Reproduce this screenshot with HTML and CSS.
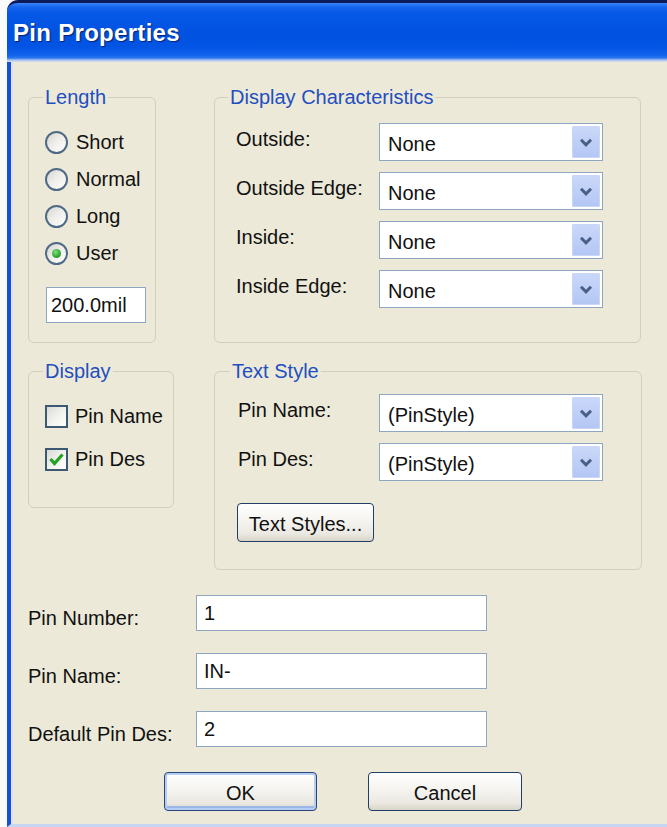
FILE: index.html
```html
<!DOCTYPE html>
<html lang="en">
<head>
<meta charset="utf-8">
<title>Pin Properties</title>
<link rel="stylesheet" href="styles.css">
</head>
<body>
<div class="window">
  <div class="titlebar"><span class="title">Pin Properties</span></div>
  <div class="client">

    <div class="group-row top-row">
      <fieldset class="group group-length">
        <legend>Length</legend>
        <div class="radio-list">
          <label class="radio"><span class="radio-mark"></span>Short</label>
          <label class="radio"><span class="radio-mark"></span>Normal</label>
          <label class="radio"><span class="radio-mark"></span>Long</label>
          <label class="radio"><span class="radio-mark is-checked"></span>User</label>
        </div>
        <div class="textbox length-box">200.0mil</div>
      </fieldset>

      <fieldset class="group group-chars">
        <legend>Display Characteristics</legend>
        <div class="field-grid chars-grid">
          <span class="field-label">Outside:</span>
          <div class="combo"><span class="combo-value">None</span><span class="combo-button"><svg width="14" height="9" viewBox="0 0 14 9"><path d="M2 1.8 L7 6.8 L12 1.8" fill="none" stroke="#4a5f86" stroke-width="3"/></svg></span></div>
          <span class="field-label">Outside Edge:</span>
          <div class="combo"><span class="combo-value">None</span><span class="combo-button"><svg width="14" height="9" viewBox="0 0 14 9"><path d="M2 1.8 L7 6.8 L12 1.8" fill="none" stroke="#4a5f86" stroke-width="3"/></svg></span></div>
          <span class="field-label">Inside:</span>
          <div class="combo"><span class="combo-value">None</span><span class="combo-button"><svg width="14" height="9" viewBox="0 0 14 9"><path d="M2 1.8 L7 6.8 L12 1.8" fill="none" stroke="#4a5f86" stroke-width="3"/></svg></span></div>
          <span class="field-label">Inside Edge:</span>
          <div class="combo"><span class="combo-value">None</span><span class="combo-button"><svg width="14" height="9" viewBox="0 0 14 9"><path d="M2 1.8 L7 6.8 L12 1.8" fill="none" stroke="#4a5f86" stroke-width="3"/></svg></span></div>
        </div>
      </fieldset>
    </div>

    <div class="group-row second-row">
      <fieldset class="group group-display">
        <legend>Display</legend>
        <div class="check-list">
          <label class="check"><span class="check-mark"></span>Pin Name</label>
          <label class="check"><span class="check-mark is-checked"><svg width="23" height="23" viewBox="0 0 23 23"><path d="M5.5 11 L9.5 15.5 L17.5 6.5" fill="none" stroke="#22a322" stroke-width="3.2"/></svg></span>Pin Des</label>
        </div>
      </fieldset>

      <fieldset class="group group-text">
        <legend>Text Style</legend>
        <div class="field-grid text-grid">
          <span class="field-label">Pin Name:</span>
          <div class="combo"><span class="combo-value">(PinStyle)</span><span class="combo-button"><svg width="14" height="9" viewBox="0 0 14 9"><path d="M2 1.8 L7 6.8 L12 1.8" fill="none" stroke="#4a5f86" stroke-width="3"/></svg></span></div>
          <span class="field-label">Pin Des:</span>
          <div class="combo"><span class="combo-value">(PinStyle)</span><span class="combo-button"><svg width="14" height="9" viewBox="0 0 14 9"><path d="M2 1.8 L7 6.8 L12 1.8" fill="none" stroke="#4a5f86" stroke-width="3"/></svg></span></div>
        </div>
        <button class="button styles-button" type="button">Text Styles...</button>
      </fieldset>
    </div>

    <div class="field-grid pin-grid">
      <span class="field-label">Pin Number:</span>
      <div class="textbox">1</div>
      <span class="field-label">Pin Name:</span>
      <div class="textbox">IN-</div>
      <span class="field-label">Default Pin Des:</span>
      <div class="textbox">2</div>
    </div>

    <div class="button-row">
      <button class="button button-default" type="button">OK</button>
      <button class="button button-cancel" type="button">Cancel</button>
    </div>

  </div>
</div>
</body>
</html>
```

FILE: styles.css
```css
* {
  box-sizing: border-box;
}

html,
body {
  margin: 0;
  padding: 0;
}

body {
  width: 667px;
  height: 827px;
  overflow: hidden;
  background: #fbfbfb;
  font-family: "Liberation Sans", Arial, sans-serif;
  font-size: 20px;
  color: #111;
}

/* Window frame */
.window {
  margin-left: 7px;
  width: 660px;
  height: 827px;
  display: flex;
  flex-direction: column;
}

.titlebar {
  flex: none;
  height: 62px;
  border-top: 3px solid #0c1c5a;
  border-top-left-radius: 11px;
  background: linear-gradient(to bottom,
    #3a86f7 0px,
    #1766ef 4px,
    #0658e7 10px,
    #0152e0 30px,
    #0254e4 44px,
    #1262ec 52px,
    #2b76f1 55px,
    #a4bfee 57px,
    #d9e1ef 59px);
  padding: 16px 0 0 6px;
}

.title {
  display: block;
  font-family: "Liberation Sans", Arial, sans-serif;
  font-weight: bold;
  font-size: 24px;
  line-height: 28px;
  letter-spacing: 0.3px;
  color: #fff;
  text-shadow: 1px 1px 1px #0a2070;
}

.client {
  flex: 1;
  background: #ece9d8;
  border-left: 4px solid #1650d8;
  border-bottom: 3px solid #c6d6f2;
  box-shadow: inset 2px 0 0 #dbe4f4;
  padding: 24px 0 0 17px;
}

/* Group boxes */
.group-row {
  display: flex;
  gap: 58px;
}

.second-row {
  margin-top: 17px;
  gap: 40px;
  align-items: flex-start;
}

.group {
  margin: 0;
  min-width: 0;
  border: 1px solid #d0d0bf;
  border-radius: 6px;
}

.group legend {
  padding: 0 2px;
  font-size: 20px;
  line-height: 22px;
  color: #1f4fc0;
}

.group-length {
  width: 128px;
  padding: 22px 0 19px 16px;
}

.group-length legend {
  margin-left: -2px;
}

.group-chars {
  width: 427px;
  padding: 15px 37px 34px 21px;
}

.group-chars legend {
  margin-left: -8px;
}

.group-display {
  width: 146px;
  padding: 23px 0 36px 16px;
}

.group-display legend {
  margin-left: -2px;
}

.group-text {
  width: 428px;
  align-self: stretch;
  padding: 12px 37px 27px 23px;
}

.group-text legend {
  margin-left: -8px;
}

/* Radio buttons */
.radio-list {
  display: flex;
  flex-direction: column;
  gap: 13px;
}

.radio {
  display: flex;
  align-items: center;
  gap: 8px;
  height: 24px;
  line-height: 23px;
}

.radio-mark {
  flex: none;
  width: 23px;
  height: 23px;
  border-radius: 50%;
  border: 2px solid #4f6a86;
  background: linear-gradient(135deg, #d6d5cf 0%, #eeede9 45%, #ffffff 100%);
  display: flex;
  align-items: center;
  justify-content: center;
}

.radio-mark.is-checked::after {
  content: "";
  width: 9px;
  height: 9px;
  border-radius: 50%;
  background: radial-gradient(circle at 40% 35%, #7fe27f 0%, #2fa52f 60%, #1d861d 100%);
}

/* Check boxes */
.check-list {
  display: flex;
  flex-direction: column;
  gap: 20px;
}

.check {
  display: flex;
  align-items: center;
  gap: 7px;
  height: 23px;
  line-height: 23px;
}

.check-mark {
  flex: none;
  width: 23px;
  height: 23px;
  border: 2px solid #3d5873;
  background: linear-gradient(135deg, #dcdcd6 0%, #f2f2ef 55%, #ffffff 100%);
  display: flex;
  align-items: center;
  justify-content: center;
}

.check-mark svg {
  display: block;
  margin: -2px;
}

/* Text boxes and combo boxes */
.textbox {
  height: 36px;
  border: 1px solid #8ea6c0;
  background: #fff;
  padding: 6px 0 0 7px;
  line-height: 23px;
  white-space: nowrap;
}

.length-box {
  width: 100px;
  height: 36px;
  margin: 22px 0 0 1px;
  padding-left: 4px;
}

.field-grid {
  display: grid;
  row-gap: 11px;
}

.chars-grid {
  grid-template-columns: 143px 224px;
}

.text-grid {
  grid-template-columns: 141px 224px;
}

.field-label {
  align-self: start;
  padding-top: 5px;
  line-height: 23px;
  white-space: nowrap;
}

.combo {
  height: 38px;
  border: 1px solid #8ea6c0;
  background: #fff;
  display: flex;
  align-items: center;
  padding: 2px;
}

.combo-value {
  flex: 1;
  padding: 5px 0 0 6px;
  line-height: 23px;
  white-space: nowrap;
}

.combo-button {
  flex: none;
  width: 28px;
  height: 32px;
  border-radius: 2px;
  background: linear-gradient(to bottom, #cad8f9 0%, #bccdf6 60%, #b3c6f4 100%);
  box-shadow: inset 0 0 0 1px #c9d6f7;
  display: flex;
  align-items: center;
  justify-content: center;
}

.combo-button svg {
  display: block;
}

/* Buttons */
.button {
  height: 39px;
  padding: 0;
  border: 1px solid #1f3f66;
  border-radius: 4px;
  background: linear-gradient(to bottom, #ffffff 0%, #f6f5f1 40%, #ebe9e2 80%, #d8d4c9 100%);
  font-family: "Liberation Sans", Arial, sans-serif;
  font-size: 20px;
  color: #111;
  line-height: 23px;
  padding-top: 3px;
}

.styles-button {
  display: block;
  width: 137px;
  margin: 22px 0 0 -1px;
}

.button-row {
  display: flex;
  gap: 51px;
  margin-top: 25px;
  padding-left: 136px;
}

.button-default {
  width: 153px;
  border-color: #27477a;
  box-shadow: inset 0 0 0 2px #b5cdf2, inset 0 -3px 0 1px #9bb7ea;
}

.button-cancel {
  width: 154px;
}

/* Pin fields */
.pin-grid {
  margin-top: 25px;
  grid-template-columns: 168px 291px;
  grid-auto-rows: 36px;
  row-gap: 22px;
}

.pin-grid .field-label {
  align-self: center;
  padding-top: 10px;
}
```
